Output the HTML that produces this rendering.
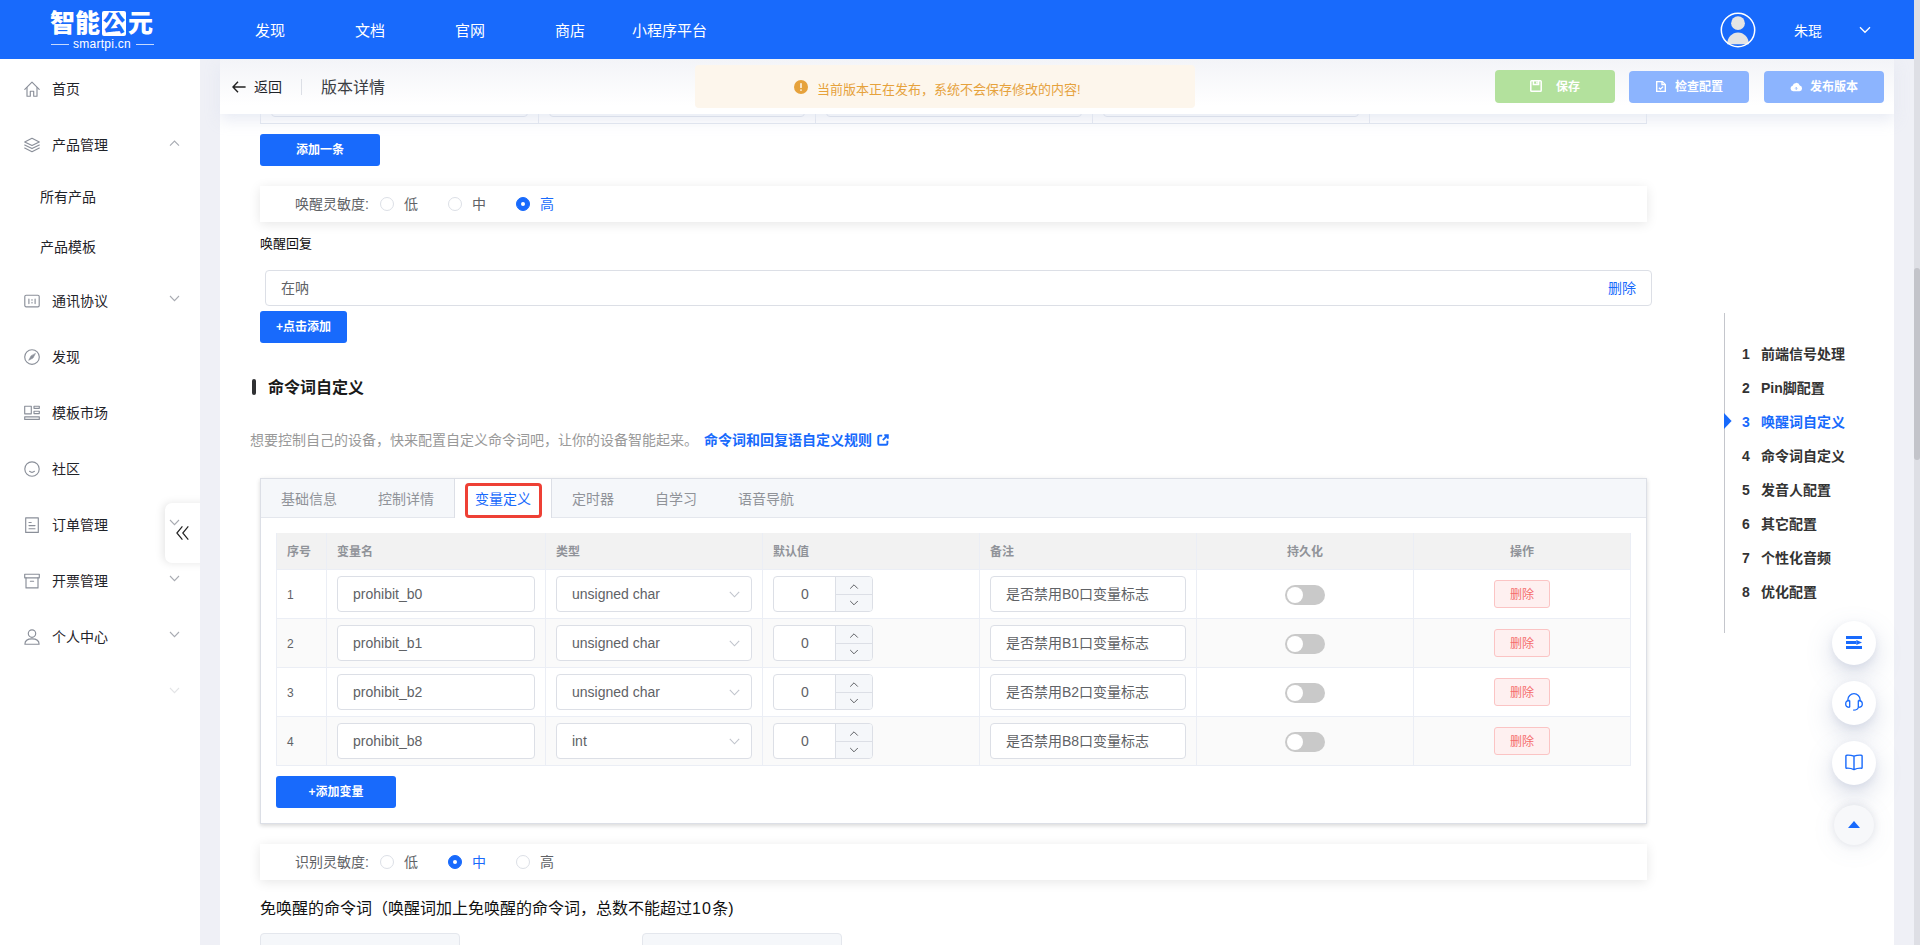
<!DOCTYPE html>
<html lang="zh-CN">
<head>
<meta charset="utf-8">
<title>版本详情</title>
<style>
*{box-sizing:border-box;margin:0;padding:0}
html,body{width:1920px;height:945px;overflow:hidden;background:#eff0f6}
body{position:relative;font-family:"Liberation Sans","Noto Sans CJK SC",sans-serif;font-size:14px;color:#606266;-webkit-font-smoothing:antialiased}
.abs{position:absolute}
.t{position:absolute;white-space:nowrap;line-height:20px;height:20px}
svg{display:block;position:absolute;overflow:visible}

/* header */
#hdr{position:absolute;left:0;top:0;width:1914px;height:59px;background:#186afc;z-index:50}
#hdr .nav{position:absolute;top:20px;font-size:15px;line-height:22px;color:#fff;white-space:nowrap}
#logo{position:absolute;left:49px;top:8px;width:106px;height:42px;color:#fff}
#logo .big{position:absolute;left:1px;top:0;font-size:25px;line-height:30px;font-weight:900;white-space:nowrap;letter-spacing:0}
#logo .gong{display:inline-block;background:#fff;color:#186afc;border-radius:2px;height:25px;line-height:25px;width:24px;text-align:center;font-size:23px;margin:0 2px 0 2px;vertical-align:top;margin-top:3px}
#logo .sm{position:absolute;left:0;top:29px;width:106px;text-align:center;font-size:12px;line-height:14px;letter-spacing:.25px}

/* sidebar */
#side{position:absolute;left:0;top:59px;width:200px;height:886px;background:#fff;z-index:10;overflow:hidden}
#side .mi{position:absolute;left:52px;font-size:14px;line-height:20px;color:#1f2329;white-space:nowrap}
#side .sub{left:40px}

/* main */
#main{position:absolute;left:220px;top:59px;width:1674px;height:886px;background:#fff;overflow:hidden;z-index:1}
#page{position:absolute;left:-220px;top:-59px;width:1920px;height:945px}

.btn{position:absolute;background:#186afc;color:#fff;font-size:12px;font-weight:700;text-align:center;border-radius:3px;white-space:nowrap}
.inp{position:absolute;border:1px solid #dcdfe6;border-radius:4px;background:#fff;color:#606266;font-size:14px;white-space:nowrap}
.radio{position:absolute;width:14px;height:14px;border-radius:50%;border:1px solid #dcdfe6;background:#fff}
.radio.on{border-color:#186afc;background:#186afc}
.radio.on:after{content:"";position:absolute;left:4px;top:4px;width:4px;height:4px;border-radius:50%;background:#fff}
.shbox{position:absolute;background:#fff;box-shadow:0 2px 12px 0 rgba(0,0,0,.10)}
</style>
</head>
<body>

<!-- ======= MAIN CONTENT ======= -->
<div id="main"><div id="page">
<div class="abs" style="left:260px;top:60px;width:1387px;height:64px;border:1px solid #dfe4ee;background:#fff"></div>
<div class="abs" style="left:538px;top:60px;width:1px;height:63px;background:#dfe4ee"></div>
<div class="abs" style="left:815px;top:60px;width:1px;height:63px;background:#dfe4ee"></div>
<div class="abs" style="left:1092px;top:60px;width:1px;height:63px;background:#dfe4ee"></div>
<div class="abs" style="left:1369px;top:60px;width:1px;height:63px;background:#dfe4ee"></div>
<div class="abs" style="left:271px;top:81px;width:257px;height:36px;border:1px solid #cfd5e2;border-radius:4px;background:#fff"></div>
<div class="abs" style="left:549px;top:81px;width:256px;height:36px;border:1px solid #cfd5e2;border-radius:4px;background:#fff"></div>
<div class="abs" style="left:826px;top:81px;width:256px;height:36px;border:1px solid #cfd5e2;border-radius:4px;background:#fff"></div>
<div class="abs" style="left:1103px;top:81px;width:256px;height:36px;border:1px solid #cfd5e2;border-radius:4px;background:#fff"></div>
<div class="btn" style="left:260px;top:134px;width:120px;height:32px;line-height:32px">添加一条</div>
<div class="shbox" style="left:260px;top:186px;width:1387px;height:36px"></div>
<div class="t" style="left:295px;top:194px">唤醒灵敏度:</div>
<div class="radio" style="left:380px;top:197px"></div><div class="t" style="left:404px;top:194px">低</div>
<div class="radio" style="left:448px;top:197px"></div><div class="t" style="left:472px;top:194px">中</div>
<div class="radio on" style="left:516px;top:197px"></div><div class="t" style="left:540px;top:194px;color:#186afc">高</div>
<div class="t" style="left:260px;top:234px;font-size:13px;color:#111">唤醒回复</div>
<div class="inp" style="left:265px;top:270px;width:1387px;height:36px;line-height:34px;padding-left:15px">在呐</div>
<div class="t" style="left:1608px;top:278px;color:#186afc">删除</div>
<div class="btn" style="left:260px;top:311px;width:87px;height:32px;line-height:32px">+点击添加</div>
<div class="abs" style="left:252px;top:379px;width:4px;height:16px;border-radius:2px;background:#303133"></div>
<div class="t" style="left:268px;top:376px;font-size:16px;line-height:24px;height:24px;font-weight:700;color:#1a1a1a">命令词自定义</div>
<div class="t" style="left:250px;top:430px;color:#999">想要控制自己的设备，快来配置自定义命令词吧，让你的设备智能起来。</div>
<div class="t" style="left:704px;top:430px;color:#186afc;font-weight:700">命令词和回复语自定义规则</div>
<svg style="left:876.5px;top:434px" width="12" height="12" viewBox="0 0 12 12" fill="none" stroke="#186afc" stroke-width="1.9"><path d="M5.2 1.6 H2.6 Q1.3 1.6 1.3 2.9 V9.4 Q1.3 10.7 2.6 10.7 H9.1 Q10.4 10.7 10.4 9.4 V6.8"/><path d="M7.3 1.2 H10.8 V4.7 M10.6 1.4 L5.8 6.2"/></svg>
<div class="abs" style="left:260px;top:478px;width:1387px;height:346px;background:#fff;border:1px solid #dcdfe6;box-shadow:0 2px 4px 0 rgba(0,0,0,.12),0 0 6px 0 rgba(0,0,0,.04)"></div>
<div class="abs" style="left:261px;top:479px;width:1385px;height:39px;background:#f5f7fa;border-bottom:1px solid #e4e7ed"></div>
<div class="abs" style="left:454px;top:479px;width:98px;height:39px;background:#fff;border-left:1px solid #dcdfe6;border-right:1px solid #dcdfe6"></div>
<div class="abs" style="left:465px;top:483px;width:77px;height:35px;border:3px solid #ee4035;border-radius:4px"></div>
<div class="t" style="left:281px;top:489px;color:#909399">基础信息</div>
<div class="t" style="left:378px;top:489px;color:#909399">控制详情</div>
<div class="t" style="left:475px;top:489px;color:#186afc">变量定义</div>
<div class="t" style="left:572px;top:489px;color:#909399">定时器</div>
<div class="t" style="left:655px;top:489px;color:#909399">自学习</div>
<div class="t" style="left:738px;top:489px;color:#909399">语音导航</div>
<div class="abs" style="left:276px;top:533px;width:1355px;height:233px;background:#ebeef5"></div>
<div class="abs" style="left:277px;top:533px;width:1353px;height:36px;background:#f2f2f2"></div>
<div class="abs" style="left:277px;top:570px;width:1353px;height:48px;background:#fff"></div>
<div class="abs" style="left:277px;top:619px;width:1353px;height:48px;background:#fafafa"></div>
<div class="abs" style="left:277px;top:668px;width:1353px;height:48px;background:#fff"></div>
<div class="abs" style="left:277px;top:717px;width:1353px;height:48px;background:#fafafa"></div>
<div class="abs" style="left:326px;top:533px;width:1px;height:232px;background:#ebeef5"></div>
<div class="abs" style="left:545px;top:533px;width:1px;height:232px;background:#ebeef5"></div>
<div class="abs" style="left:762px;top:533px;width:1px;height:232px;background:#ebeef5"></div>
<div class="abs" style="left:979px;top:533px;width:1px;height:232px;background:#ebeef5"></div>
<div class="abs" style="left:1196px;top:533px;width:1px;height:232px;background:#ebeef5"></div>
<div class="abs" style="left:1413px;top:533px;width:1px;height:232px;background:#ebeef5"></div>
<div class="t" style="left:287px;top:542px;font-size:12px;font-weight:700;color:#909399">序号</div>
<div class="t" style="left:337px;top:542px;font-size:12px;font-weight:700;color:#909399">变量名</div>
<div class="t" style="left:556px;top:542px;font-size:12px;font-weight:700;color:#909399">类型</div>
<div class="t" style="left:773px;top:542px;font-size:12px;font-weight:700;color:#909399">默认值</div>
<div class="t" style="left:990px;top:542px;font-size:12px;font-weight:700;color:#909399">备注</div>
<div class="t" style="left:1197px;top:542px;width:216px;text-align:center;font-size:12px;font-weight:700;color:#909399">持久化</div>
<div class="t" style="left:1414px;top:542px;width:216px;text-align:center;font-size:12px;font-weight:700;color:#909399">操作</div>
<div class="t" style="left:287px;top:585px;font-size:12px">1</div>
<div class="inp" style="left:337px;top:576px;width:198px;height:36px;line-height:34px;padding-left:15px">prohibit_b0</div>
<div class="inp" style="left:556px;top:576px;width:196px;height:36px;line-height:34px;padding-left:15px">unsigned char</div>
<svg style="left:729px;top:591px" width="11" height="7" viewBox="0 0 11 7"><path d="M0.8 0.9 L5.5 5.8 L10.2 0.9" fill="none" stroke="#c0c4cc" stroke-width="1.1"/></svg>
<div class="inp" style="left:773px;top:576px;width:100px;height:36px;overflow:hidden"><div class="abs" style="left:61px;top:0;width:37px;height:34px;background:#f5f7fa;border-left:1px solid #dcdfe6"></div><div class="abs" style="left:62px;top:17px;width:36px;height:1px;background:#dcdfe6"></div><div class="abs" style="left:0;top:0;width:62px;line-height:34px;text-align:center">0</div></div>
<svg style="left:849px;top:584px" width="10" height="6" viewBox="0 0 10 6"><path d="M1.2 4.6 L5 0.8 L8.8 4.6" fill="none" stroke="#606266" stroke-width="1"/></svg>
<svg style="left:849px;top:600px" width="10" height="6" viewBox="0 0 10 6"><path d="M1.2 1 L5 4.8 L8.8 1" fill="none" stroke="#606266" stroke-width="1"/></svg>
<div class="inp" style="left:990px;top:576px;width:196px;height:36px;line-height:34px;padding-left:15px">是否禁用B0口变量标志</div>
<div class="abs" style="left:1285px;top:585px;width:40px;height:20px;border-radius:10px;background:#c9c9c9"><div class="abs" style="left:2px;top:2px;width:16px;height:16px;border-radius:50%;background:#fff"></div></div>
<div class="abs" style="left:1494px;top:580px;width:56px;height:28px;line-height:28px;border:1px solid #fbc4c4;border-radius:3px;background:#fef0f0;color:#f56c6c;font-size:12px;text-align:center">删除</div>
<div class="t" style="left:287px;top:634px;font-size:12px">2</div>
<div class="inp" style="left:337px;top:625px;width:198px;height:36px;line-height:34px;padding-left:15px">prohibit_b1</div>
<div class="inp" style="left:556px;top:625px;width:196px;height:36px;line-height:34px;padding-left:15px">unsigned char</div>
<svg style="left:729px;top:640px" width="11" height="7" viewBox="0 0 11 7"><path d="M0.8 0.9 L5.5 5.8 L10.2 0.9" fill="none" stroke="#c0c4cc" stroke-width="1.1"/></svg>
<div class="inp" style="left:773px;top:625px;width:100px;height:36px;overflow:hidden"><div class="abs" style="left:61px;top:0;width:37px;height:34px;background:#f5f7fa;border-left:1px solid #dcdfe6"></div><div class="abs" style="left:62px;top:17px;width:36px;height:1px;background:#dcdfe6"></div><div class="abs" style="left:0;top:0;width:62px;line-height:34px;text-align:center">0</div></div>
<svg style="left:849px;top:633px" width="10" height="6" viewBox="0 0 10 6"><path d="M1.2 4.6 L5 0.8 L8.8 4.6" fill="none" stroke="#606266" stroke-width="1"/></svg>
<svg style="left:849px;top:649px" width="10" height="6" viewBox="0 0 10 6"><path d="M1.2 1 L5 4.8 L8.8 1" fill="none" stroke="#606266" stroke-width="1"/></svg>
<div class="inp" style="left:990px;top:625px;width:196px;height:36px;line-height:34px;padding-left:15px">是否禁用B1口变量标志</div>
<div class="abs" style="left:1285px;top:634px;width:40px;height:20px;border-radius:10px;background:#c9c9c9"><div class="abs" style="left:2px;top:2px;width:16px;height:16px;border-radius:50%;background:#fff"></div></div>
<div class="abs" style="left:1494px;top:629px;width:56px;height:28px;line-height:28px;border:1px solid #fbc4c4;border-radius:3px;background:#fef0f0;color:#f56c6c;font-size:12px;text-align:center">删除</div>
<div class="t" style="left:287px;top:683px;font-size:12px">3</div>
<div class="inp" style="left:337px;top:674px;width:198px;height:36px;line-height:34px;padding-left:15px">prohibit_b2</div>
<div class="inp" style="left:556px;top:674px;width:196px;height:36px;line-height:34px;padding-left:15px">unsigned char</div>
<svg style="left:729px;top:689px" width="11" height="7" viewBox="0 0 11 7"><path d="M0.8 0.9 L5.5 5.8 L10.2 0.9" fill="none" stroke="#c0c4cc" stroke-width="1.1"/></svg>
<div class="inp" style="left:773px;top:674px;width:100px;height:36px;overflow:hidden"><div class="abs" style="left:61px;top:0;width:37px;height:34px;background:#f5f7fa;border-left:1px solid #dcdfe6"></div><div class="abs" style="left:62px;top:17px;width:36px;height:1px;background:#dcdfe6"></div><div class="abs" style="left:0;top:0;width:62px;line-height:34px;text-align:center">0</div></div>
<svg style="left:849px;top:682px" width="10" height="6" viewBox="0 0 10 6"><path d="M1.2 4.6 L5 0.8 L8.8 4.6" fill="none" stroke="#606266" stroke-width="1"/></svg>
<svg style="left:849px;top:698px" width="10" height="6" viewBox="0 0 10 6"><path d="M1.2 1 L5 4.8 L8.8 1" fill="none" stroke="#606266" stroke-width="1"/></svg>
<div class="inp" style="left:990px;top:674px;width:196px;height:36px;line-height:34px;padding-left:15px">是否禁用B2口变量标志</div>
<div class="abs" style="left:1285px;top:683px;width:40px;height:20px;border-radius:10px;background:#c9c9c9"><div class="abs" style="left:2px;top:2px;width:16px;height:16px;border-radius:50%;background:#fff"></div></div>
<div class="abs" style="left:1494px;top:678px;width:56px;height:28px;line-height:28px;border:1px solid #fbc4c4;border-radius:3px;background:#fef0f0;color:#f56c6c;font-size:12px;text-align:center">删除</div>
<div class="t" style="left:287px;top:732px;font-size:12px">4</div>
<div class="inp" style="left:337px;top:723px;width:198px;height:36px;line-height:34px;padding-left:15px">prohibit_b8</div>
<div class="inp" style="left:556px;top:723px;width:196px;height:36px;line-height:34px;padding-left:15px">int</div>
<svg style="left:729px;top:738px" width="11" height="7" viewBox="0 0 11 7"><path d="M0.8 0.9 L5.5 5.8 L10.2 0.9" fill="none" stroke="#c0c4cc" stroke-width="1.1"/></svg>
<div class="inp" style="left:773px;top:723px;width:100px;height:36px;overflow:hidden"><div class="abs" style="left:61px;top:0;width:37px;height:34px;background:#f5f7fa;border-left:1px solid #dcdfe6"></div><div class="abs" style="left:62px;top:17px;width:36px;height:1px;background:#dcdfe6"></div><div class="abs" style="left:0;top:0;width:62px;line-height:34px;text-align:center">0</div></div>
<svg style="left:849px;top:731px" width="10" height="6" viewBox="0 0 10 6"><path d="M1.2 4.6 L5 0.8 L8.8 4.6" fill="none" stroke="#606266" stroke-width="1"/></svg>
<svg style="left:849px;top:747px" width="10" height="6" viewBox="0 0 10 6"><path d="M1.2 1 L5 4.8 L8.8 1" fill="none" stroke="#606266" stroke-width="1"/></svg>
<div class="inp" style="left:990px;top:723px;width:196px;height:36px;line-height:34px;padding-left:15px">是否禁用B8口变量标志</div>
<div class="abs" style="left:1285px;top:732px;width:40px;height:20px;border-radius:10px;background:#c9c9c9"><div class="abs" style="left:2px;top:2px;width:16px;height:16px;border-radius:50%;background:#fff"></div></div>
<div class="abs" style="left:1494px;top:727px;width:56px;height:28px;line-height:28px;border:1px solid #fbc4c4;border-radius:3px;background:#fef0f0;color:#f56c6c;font-size:12px;text-align:center">删除</div>
<div class="btn" style="left:276px;top:776px;width:120px;height:32px;line-height:32px">+添加变量</div>
<div class="shbox" style="left:260px;top:844px;width:1387px;height:36px"></div>
<div class="t" style="left:295px;top:852px">识别灵敏度:</div>
<div class="radio" style="left:380px;top:855px"></div><div class="t" style="left:404px;top:852px">低</div>
<div class="radio on" style="left:448px;top:855px"></div><div class="t" style="left:472px;top:852px;color:#186afc">中</div>
<div class="radio" style="left:516px;top:855px"></div><div class="t" style="left:540px;top:852px">高</div>
<div class="t" style="left:260px;top:897px;font-size:16px;line-height:24px;height:24px;color:#111">免唤醒的命令词（唤醒词加上免唤醒的命令词，总数不能超过<span style="letter-spacing:1.2px">10</span>条)</div>
<div class="abs" style="left:260px;top:933px;width:200px;height:40px;border:1px solid #e4e7ed;border-radius:4px;background:#f5f7fa"></div>
<div class="abs" style="left:642px;top:933px;width:200px;height:40px;border:1px solid #e4e7ed;border-radius:4px;background:#f5f7fa"></div>


</div></div>

<!-- ======= SUBHEADER ======= -->
<div id="sub" class="abs" style="left:220px;top:59px;width:1674px;height:55px;background:linear-gradient(#f3f4f8,#ffffff 85%);z-index:5;box-shadow:0 6px 14px rgba(226,230,241,.8)">
 <svg style="left:12px;top:22px" width="14" height="12" viewBox="0 0 14 12" fill="none" stroke="#222" stroke-width="1.4"><path d="M6 0.8 L1 6 L6 11.2 M1.2 6 H13.6"/></svg>
 <div class="t" style="left:34px;top:18px;color:#1f2329">返回</div>
 <div class="abs" style="left:81px;top:20px;width:1px;height:16px;background:#dcdfe6"></div>
 <div class="t" style="left:101px;top:17px;font-size:16px;line-height:24px;height:24px;color:#3a3d42">版本详情</div>
 <div class="abs" style="left:475px;top:6px;width:500px;height:43px;border-radius:4px;background:#fdf6ec"></div>
 <svg style="left:574px;top:21px" width="14" height="14" viewBox="0 0 14 14"><circle cx="7" cy="7" r="7" fill="#e6a23c"/><rect x="6.2" y="3.1" width="1.6" height="5" rx=".6" fill="#fdf6ec"/><rect x="6.2" y="9.2" width="1.6" height="1.7" rx=".6" fill="#fdf6ec"/></svg>
 <div class="t" style="left:597px;top:21px;font-size:13px;color:#e6a23c">当前版本正在发布，系统不会保存修改的内容!</div>
 <div class="abs" style="left:1275px;top:11px;width:120px;height:33px;border-radius:4px;background:#b3e19d"></div>
 <div class="abs" style="left:1409px;top:12px;width:120px;height:32px;border-radius:4px;background:#8cb4fe"></div>
 <div class="abs" style="left:1544px;top:12px;width:120px;height:32px;border-radius:4px;background:#8cb4fe"></div>
 <div class="t" style="left:1336px;top:18px;font-size:12px;font-weight:700;color:#fff">保存</div>
 <div class="t" style="left:1455px;top:18px;font-size:12px;font-weight:700;color:#fff">检查配置</div>
 <div class="t" style="left:1590px;top:18px;font-size:12px;font-weight:700;color:#fff">发布版本</div>
 <svg style="left:1310px;top:21px" width="12" height="12" viewBox="0 0 12 12" fill="none" stroke="#fff" stroke-width="1.5"><path d="M1.6 0.8 H10.4 Q11.2 0.8 11.2 1.6 V10.4 Q11.2 11.2 10.4 11.2 H1.6 Q0.8 11.2 0.8 10.4 V1.6 Q0.8 0.8 1.6 0.8 Z"/><path d="M3.4 1 V4.6 H8.6 V1 M6.9 1.6 V3.4"/></svg>
 <svg style="left:1436px;top:22px" width="10" height="11" viewBox="0 0 10 12" preserveAspectRatio="none" fill="none" stroke="#fff" stroke-width="1.4"><path d="M0.7 0.7 H6.3 L9.3 3.7 V11.3 H0.7 Z"/><path d="M6 0.9 V4 H9.1"/><path d="M2.9 7.4 L4.4 8.9 L7.1 6.1"/></svg>
 <svg style="left:1569.5px;top:22.5px" width="12.5" height="9.6" viewBox="0 0 13 10"><path d="M3.3 9.6 A2.9 2.9 0 0 1 2.7 3.9 A3.9 3.9 0 0 1 10.2 3.6 A3.05 3.05 0 0 1 9.9 9.6 Z" fill="#fff"/><path d="M6.5 8.2 V6 M5.4 6.7 L6.5 5.6 L7.6 6.7" fill="none" stroke="#8cb4fe" stroke-width="1"/></svg>
</div>


<!-- ======= SIDEBAR ======= -->
<div id="side">
<div class="mi" style="top:20px">首页</div>
<div class="mi" style="top:76px">产品管理</div>
<svg style="left:169px;top:81px;opacity:1" width="11" height="7" viewBox="0 0 11 7"><path d="M1 5.6 L5.5 1 L10 5.6" fill="none" stroke="#a8abb2" stroke-width="1.1"/></svg>
<div class="mi sub" style="top:128px">所有产品</div>
<div class="mi sub" style="top:178px">产品模板</div>
<div class="mi" style="top:232px">通讯协议</div>
<svg style="left:169px;top:236px;opacity:1" width="11" height="7" viewBox="0 0 11 7"><path d="M1 1 L5.5 5.6 L10 1" fill="none" stroke="#a8abb2" stroke-width="1.1"/></svg>
<div class="mi" style="top:288px">发现</div>
<div class="mi" style="top:344px">模板市场</div>
<div class="mi" style="top:400px">社区</div>
<div class="mi" style="top:456px">订单管理</div>
<div class="mi" style="top:512px">开票管理</div>
<svg style="left:169px;top:516px;opacity:1" width="11" height="7" viewBox="0 0 11 7"><path d="M1 1 L5.5 5.6 L10 1" fill="none" stroke="#a8abb2" stroke-width="1.1"/></svg>
<div class="mi" style="top:568px">个人中心</div>
<svg style="left:169px;top:572px;opacity:1" width="11" height="7" viewBox="0 0 11 7"><path d="M1 1 L5.5 5.6 L10 1" fill="none" stroke="#a8abb2" stroke-width="1.1"/></svg>
<svg style="left:169px;top:628px;opacity:0.32" width="11" height="7" viewBox="0 0 11 7"><path d="M1 1 L5.5 5.6 L10 1" fill="none" stroke="#a8abb2" stroke-width="1.1"/></svg>
<svg style="left:24px;top:22px" width="16" height="16" viewBox="0 0 16 16" fill="none" stroke="#8a8f99" stroke-width="1.15" stroke-linejoin="round" stroke-linecap="round"><path d="M0.8 8.3 L8 1.2 L15.2 8.3"/><path d="M3 6.6 V15.2 H6.3 V10.2 H9.7 V15.2 H13 V6.6"/></svg>
<svg style="left:24px;top:78px" width="16" height="16" viewBox="0 0 16 16" fill="none" stroke="#8a8f99" stroke-width="1.15" stroke-linejoin="round" stroke-linecap="round"><path d="M8 1.3 L15.3 4.9 L8 8.5 L0.7 4.9 Z"/><path d="M0.7 8 L8 11.6 L15.3 8"/><path d="M0.7 11.1 L8 14.7 L15.3 11.1"/></svg>
<svg style="left:24px;top:234px" width="16" height="16" viewBox="0 0 16 16" fill="none" stroke="#8a8f99" stroke-width="1.15" stroke-linejoin="round" stroke-linecap="round"><rect x="0.8" y="2.2" width="14.4" height="11.6" rx="1.3"/><path d="M4.9 6 V10.6 M11.1 6 V10.6 M8 6.6 V7.2 M8 9.4 V10"/></svg>
<svg style="left:24px;top:290px" width="16" height="16" viewBox="0 0 16 16" fill="none" stroke="#8a8f99" stroke-width="1.15" stroke-linejoin="round" stroke-linecap="round"><circle cx="8" cy="8" r="7.3"/><path d="M11.3 4.7 L9 9 L4.7 11.3 L7 7 Z" fill="#8a8f99" stroke-width=".6"/></svg>
<svg style="left:24px;top:346px" width="16" height="16" viewBox="0 0 16 16" fill="none" stroke="#8a8f99" stroke-width="1.15" stroke-linejoin="round" stroke-linecap="round"><rect x="0.7" y="1.2" width="6.6" height="7.6"/><rect x="10" y="1.2" width="5.3" height="2.1"/><rect x="10" y="6.2" width="5.3" height="2.4"/><rect x="0.7" y="11.8" width="14.6" height="2.6"/></svg>
<svg style="left:24px;top:402px" width="16" height="16" viewBox="0 0 16 16" fill="none" stroke="#8a8f99" stroke-width="1.15" stroke-linejoin="round" stroke-linecap="round"><circle cx="8" cy="8" r="7.2"/><path d="M5.6 10.3 Q8 12.3 10.4 10.3"/></svg>
<svg style="left:24px;top:458px" width="16" height="16" viewBox="0 0 16 16" fill="none" stroke="#8a8f99" stroke-width="1.15" stroke-linejoin="round" stroke-linecap="round"><rect x="1.7" y="0.8" width="12.6" height="14.6"/><path d="M5 5.5 H7.2 M5 8.6 H11 M5 11.7 H11"/></svg>
<svg style="left:24px;top:514px" width="16" height="16" viewBox="0 0 16 16" fill="none" stroke="#8a8f99" stroke-width="1.15" stroke-linejoin="round" stroke-linecap="round"><rect x="0.7" y="1.2" width="14.6" height="3.6"/><path d="M2 4.8 V14.9 H14 V4.8"/><path d="M6.4 8.2 H9.6"/></svg>
<svg style="left:24px;top:570px" width="16" height="16" viewBox="0 0 16 16" fill="none" stroke="#8a8f99" stroke-width="1.15" stroke-linejoin="round" stroke-linecap="round"><circle cx="8" cy="4.6" r="3.7"/><path d="M0.9 15.2 C0.9 10.2 5 9.9 8 9.9 C11 9.9 15.1 10.2 15.1 15.2 Z"/></svg>
<div class="abs" style="left:165px;top:444px;width:50px;height:60px;background:#fff;border-radius:7px 0 0 7px;box-shadow:-2px 0 8px rgba(0,0,0,.10)"></div>
<svg style="left:176px;top:467px" width="13" height="14" viewBox="0 0 13 14"><path d="M6.4 0.4 L0.9 7 L6.4 13.6 M12.3 0.4 L6.8 7 L12.3 13.6" fill="none" stroke="#222" stroke-width="1.2"/></svg>
<svg style="left:169px;top:460px;opacity:1" width="11" height="7" viewBox="0 0 11 7"><path d="M1 1 L5.5 5.6 L10 1" fill="none" stroke="#a8abb2" stroke-width="1.1"/></svg>

</div>

<!-- ======= HEADER ======= -->
<div id="hdr">
<div id="logo">
  <div class="big"><span>智能</span><span class="gong">公</span><span>元</span></div>
  <div class="sm">smartpi.cn</div>
  <div class="abs" style="left:2px;top:36px;width:18px;height:1px;background:rgba(255,255,255,.75)"></div>
  <div class="abs" style="left:87px;top:36px;width:18px;height:1px;background:rgba(255,255,255,.75)"></div>
</div>
<div class="nav" style="left:255px">发现</div>
<div class="nav" style="left:355px">文档</div>
<div class="nav" style="left:455px">官网</div>
<div class="nav" style="left:555px">商店</div>
<div class="nav" style="left:632px">小程序平台</div>
<svg style="left:1720px;top:12px" width="36" height="36" viewBox="0 0 36 36">
  <circle cx="18" cy="11.2" r="6.9" fill="#e4e4e4"/><path d="M7.2 32.2 A10.8 11.8 0 0 1 28.8 32.2 Z" fill="#e4e4e4"/>
  <circle cx="18" cy="18" r="16.7" fill="none" stroke="#fff" stroke-width="1.5"/>
</svg>
<div class="nav" style="left:1794px;top:21px;font-size:14px;line-height:20px">朱琨</div>
<svg style="left:1859px;top:26px" width="12" height="8" viewBox="0 0 12 8"><path d="M1 1.2 L6 6.3 L11 1.2" fill="none" stroke="#fff" stroke-width="1.3"/></svg>

</div>

<!-- ======= RIGHT NAV / FABS / SCROLLBAR ======= -->
<div class="abs" style="left:1724px;top:313px;width:1px;height:320px;background:#c4c6cc;z-index:6"></div>
<div class="t" style="left:1742px;top:344px;font-weight:700;color:#333;z-index:6">1</div><div class="t" style="left:1761px;top:344px;font-weight:700;color:#333;z-index:6">前端信号处理</div>
<div class="t" style="left:1742px;top:378px;font-weight:700;color:#333;z-index:6">2</div><div class="t" style="left:1761px;top:378px;font-weight:700;color:#333;z-index:6">Pin脚配置</div>
<div class="t" style="left:1742px;top:412px;font-weight:700;color:#186afc;z-index:6">3</div><div class="t" style="left:1761px;top:412px;font-weight:700;color:#186afc;z-index:6">唤醒词自定义</div>
<div class="t" style="left:1742px;top:446px;font-weight:700;color:#333;z-index:6">4</div><div class="t" style="left:1761px;top:446px;font-weight:700;color:#333;z-index:6">命令词自定义</div>
<div class="t" style="left:1742px;top:480px;font-weight:700;color:#333;z-index:6">5</div><div class="t" style="left:1761px;top:480px;font-weight:700;color:#333;z-index:6">发音人配置</div>
<div class="t" style="left:1742px;top:514px;font-weight:700;color:#333;z-index:6">6</div><div class="t" style="left:1761px;top:514px;font-weight:700;color:#333;z-index:6">其它配置</div>
<div class="t" style="left:1742px;top:548px;font-weight:700;color:#333;z-index:6">7</div><div class="t" style="left:1761px;top:548px;font-weight:700;color:#333;z-index:6">个性化音频</div>
<div class="t" style="left:1742px;top:582px;font-weight:700;color:#333;z-index:6">8</div><div class="t" style="left:1761px;top:582px;font-weight:700;color:#333;z-index:6">优化配置</div>
<svg style="left:1724px;top:413px;z-index:6" width="8" height="16" viewBox="0 0 8 16"><path d="M0 0 L7.6 8 L0 16 Z" fill="#186afc"/></svg>
<div class="abs" style="left:1832px;top:621px;width:44px;height:44px;border-radius:50%;background:#fff;box-shadow:0 10px 26px rgba(110,125,165,.26),0 3px 7px rgba(110,125,165,.12);z-index:7"><svg style="left:14px;top:15px" width="16" height="13" viewBox="0 0 16 13" fill="#186afc"><rect x="0" y="0" width="16" height="3"/><rect x="0" y="5" width="10.4" height="3"/><rect x="0" y="10" width="16" height="3"/><path d="M10.4 3.9 L16 6.5 L10.4 9.1 Z"/></svg></div>
<div class="abs" style="left:1832px;top:681px;width:44px;height:44px;border-radius:50%;background:#fff;box-shadow:0 10px 26px rgba(110,125,165,.26),0 3px 7px rgba(110,125,165,.12);z-index:7"><svg style="left:13px;top:12px" width="18" height="18" viewBox="0 0 18 18" fill="none" stroke="#186afc" stroke-width="1.3"><path d="M2.9 7.6 V6.6 A6.1 5.9 0 0 1 15.1 6.6 V7.6"/><path d="M4.7 7.5 V14.3 M4.7 7.5 Q0.7 7.5 0.7 10.9 Q0.7 14.3 4.7 14.3"/><path d="M13.3 7.5 V14.3 M13.3 7.5 Q17.3 7.5 17.3 10.9 Q17.3 14.3 13.3 14.3"/><path d="M13.3 14.3 Q13 17.2 8.2 17.2"/></svg></div>
<div class="abs" style="left:1832px;top:741px;width:44px;height:44px;border-radius:50%;background:#fff;box-shadow:0 10px 26px rgba(110,125,165,.26),0 3px 7px rgba(110,125,165,.12);z-index:7"><svg style="left:13px;top:13px" width="18" height="17" viewBox="0 0 18 17" fill="none" stroke="#186afc" stroke-width="1.4" stroke-linejoin="round"><path d="M9 2.2 Q5.5 0.9 1.6 1.2 Q0.9 1.2 0.9 2 V13.4 Q0.9 14.2 1.6 14.2 Q5.5 13.9 9 15.6 Q12.5 13.9 16.4 14.2 Q17.1 14.2 17.1 13.4 V2 Q17.1 1.2 16.4 1.2 Q12.5 0.9 9 2.2 Z M9 2.2 V15.6"/></svg></div>
<div class="abs" style="left:1834px;top:805px;width:40px;height:40px;border-radius:50%;background:#f7f8fa;box-shadow:0 0 8px rgba(40,50,80,.12),0 4px 24px rgba(110,125,165,.10);z-index:7"><svg style="left:14px;top:16px" width="12" height="7" viewBox="0 0 12 7"><path d="M0 7 L6 0 L12 7 Z" fill="#186afc"/></svg></div>
<div class="abs" style="left:1914px;top:0;width:6px;height:945px;background:#dedfe5;z-index:60"></div>
<div class="abs" style="left:1914px;top:268px;width:6px;height:192px;border-radius:3px;background:#c3c4ca;z-index:61"></div>


</body>
</html>
